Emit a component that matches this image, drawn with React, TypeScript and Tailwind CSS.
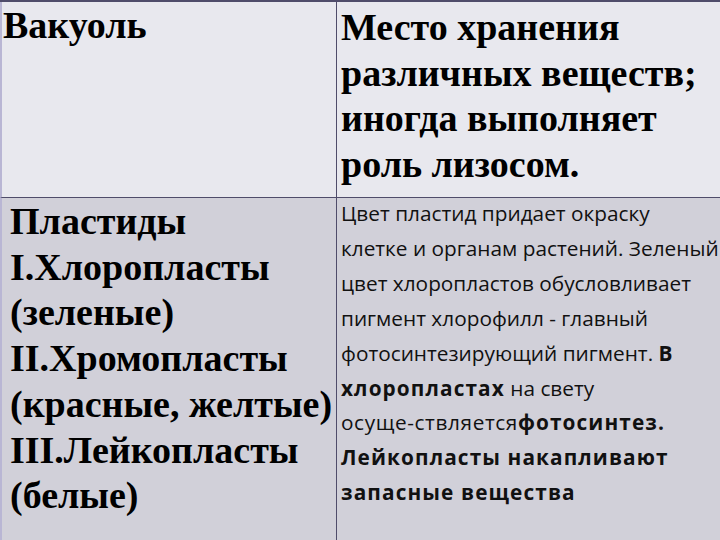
import React from 'react';

const serif = { fontFamily: '"Liberation Serif", "Times New Roman", serif' };
const sans = { fontFamily: '"Open Sans", "Noto Sans", sans-serif' };

const plastids = [
  'Пластиды',
  'I.Хлоропласты',
  '(зеленые)',
  'II.Хромопласты',
  '(красные, желтые)',
  'III.Лейкопласты',
  '(белые)',
];

const Strong: React.FC<{ children: React.ReactNode }> = ({ children }) => (
  <b className="font-bold tracking-[1.1px]">{children}</b>
);

const App: React.FC = () => {
  return (
    <div className="w-[720px] h-[540px] overflow-hidden bg-[#e8e8ee] text-black">
      <div className="grid grid-cols-[337px_1fr] grid-rows-[196px_1fr] h-full border-t-2 border-[#4f4c6a]">
        <div
          className="border-l-2 border-r border-b border-l-[#b9b6d4] border-r-[#4f4c6a] border-b-[#4f4c6a] bg-[#e8e8ee] pl-[1px] pt-[1px]"
          style={serif}
        >
          <p className="text-[38px] leading-[45px] font-bold whitespace-nowrap">Вакуоль</p>
        </div>
        <div className="border-b border-[#4f4c6a] bg-[#e8e8ee] pl-[4px] pt-[3px]" style={serif}>
          <p className="text-[38px] leading-[45.5px] font-bold whitespace-nowrap">
            Место хранения
            <br />
            различных веществ;
            <br />
            иногда выполняет
            <br />
            роль лизосом.
          </p>
        </div>
        <div
          className="border-l-2 border-r border-l-[#b9b6d4] border-r-[#4f4c6a] bg-[#d1d0d9] pl-[8px] pt-[1px]"
          style={serif}
        >
          {plastids.map((line) => (
            <p key={line} className="text-[38px] leading-[45.7px] font-bold whitespace-nowrap">
              {line}
            </p>
          ))}
        </div>
        <div className="bg-[#d1d0d9] pl-[4px]" style={sans}>
          <p className="-mt-[2px] text-[20.8px] leading-[34.9px] whitespace-nowrap text-[#111]">
            Цвет пластид придает окраску
            <br />
            клетке и органам растений. Зеленый
            <br />
            цвет хлоропластов обусловливает
            <br />
            пигмент хлорофилл - главный
            <br />
            фотосинтезирующий пигмент. <Strong>В</Strong>
            <br />
            <Strong>хлоропластах</Strong> на свету
            <br />
            <span className="tracking-[0.6px]">осуще-ствляется</span>
            <Strong>фотосинтез.</Strong>
            <br />
            <Strong>Лейкопласты накапливают</Strong>
            <br />
            <Strong>запасные вещества</Strong>
          </p>
        </div>
      </div>
    </div>
  );
};

export default App;
